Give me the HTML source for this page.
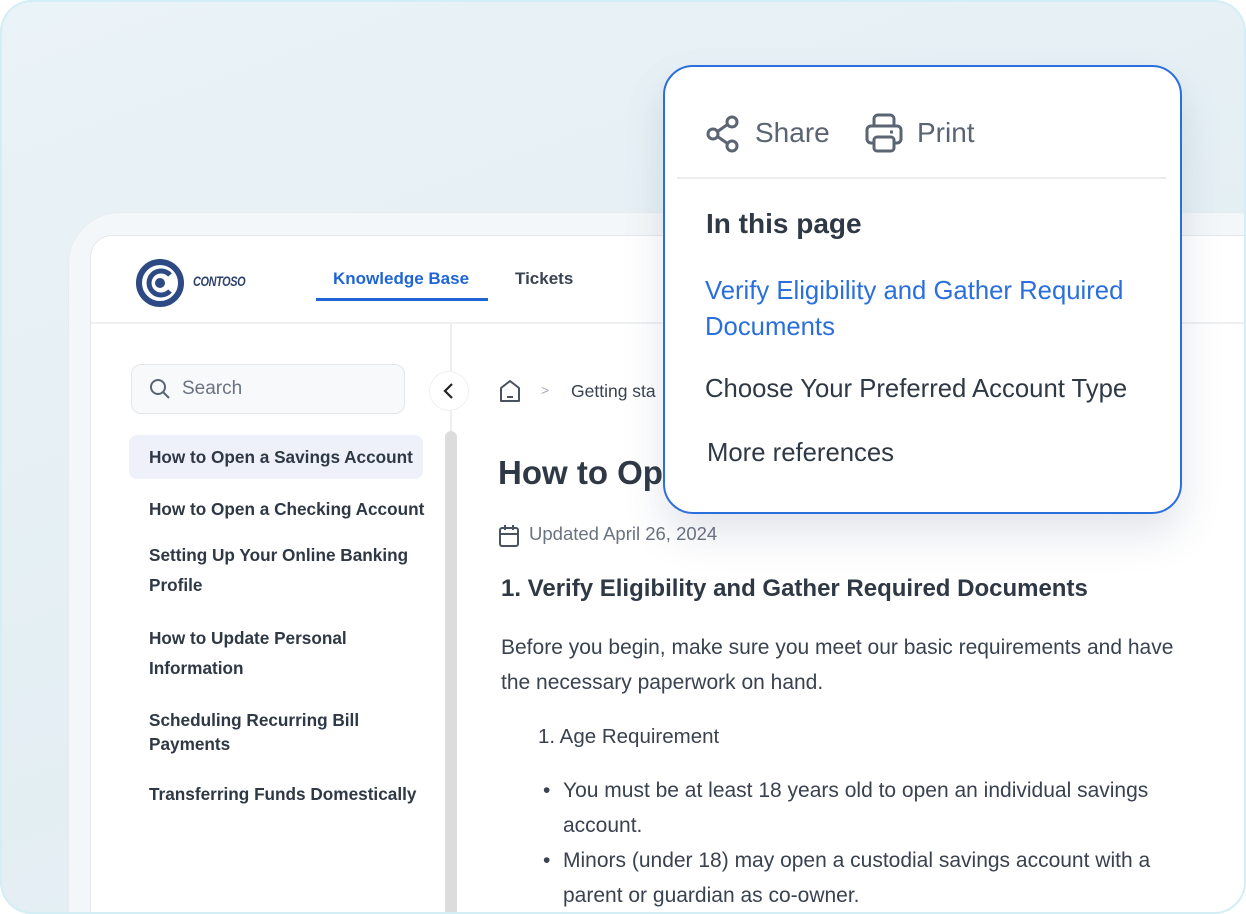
<!DOCTYPE html>
<html><head><meta charset="utf-8"><style>
*{margin:0;padding:0;box-sizing:border-box}
body{width:1246px;height:914px;overflow:hidden;font-family:"Liberation Sans",sans-serif;background:#fff;position:relative}
.frame{position:absolute;left:0;top:0;width:1246px;height:914px;border-radius:32px;background:linear-gradient(160deg,#eaf3f7,#e3eef3 60%,#e9f2f6);overflow:hidden}
.fb{position:absolute;left:0;top:0;width:1246px;height:914px;border-radius:32px;border:2px solid #d3eef4;pointer-events:none}
.panel{position:absolute;left:68px;top:212px;width:1220px;height:760px;border-radius:52px;background:#f4f7f9;border:1px solid #e6edf1}
.card{position:absolute;left:90px;top:235px;width:1200px;height:720px;border-radius:22px;background:#fff;border:1px solid #e3e7eb;overflow:hidden}
.in{position:absolute;left:2px;top:2px;width:1200px;height:720px}
.abs{position:absolute}
.hdr{left:0;top:0;width:1200px;height:88px;border-bottom:2px solid #eef0f2}
.nav{font-size:17px;font-weight:bold;color:#3b4452}
.item{position:absolute;font-size:17.2px;font-weight:bold;color:#2f3845;line-height:30px;white-space:nowrap}
.pop{position:absolute;left:663px;top:65px;width:519px;height:449px;border:2px solid #2b6fdc;border-radius:30px;background:#fff;box-shadow:0 20px 40px rgba(60,80,120,.15)}
.body{color:#3a4250;font-size:21px}
</style></head><body>
<div class="frame">
<div class="panel"></div>
<div class="card">
 <div class="abs hdr"></div>
 <div class="in">
 <svg class="abs" style="left:42px;top:20px" width="50" height="50" viewBox="0 0 50 50"><circle cx="25" cy="25" r="21" fill="none" stroke="#2d4a84" stroke-width="6"/><path d="M35 17 A12 12 0 1 0 35 33" fill="none" stroke="#2d4a84" stroke-width="5"/><circle cx="25" cy="25" r="5" fill="#2d4a84"/></svg>
 <div class="abs" style="left:100px;top:35px;font-size:14px;font-weight:bold;font-style:italic;color:#2d3f6b;letter-spacing:-.5px;transform:scaleX(.78);transform-origin:left">CONTOSO</div>
 <div class="abs nav" style="left:240px;top:31px;color:#1f65d6">Knowledge Base</div>
 <div class="abs" style="left:223px;top:60px;width:172px;height:3px;background:#1f65d6"></div>
 <div class="abs nav" style="left:422px;top:31px">Tickets</div>
 <div class="abs" style="left:357px;top:86px;width:2px;height:640px;background:#eceef0"></div>
 <div class="abs" style="left:38px;top:126px;width:274px;height:50px;border:1px solid #e3e6ea;border-radius:10px;background:#f7f9fb"></div>
 <svg class="abs" style="left:56px;top:140px" width="22" height="22" viewBox="0 0 22 22"><circle cx="9" cy="9" r="7" fill="none" stroke="#5b6472" stroke-width="2"/><path d="M14 14l6 6" stroke="#5b6472" stroke-width="2"/></svg>
 <div class="abs" style="left:89px;top:140px;font-size:19px;color:#6b7380">Search</div>
 <div class="abs" style="left:336px;top:133px;width:40px;height:40px;border-radius:50%;background:#fff;border:1px solid #eef0f2"></div>
 <svg class="abs" style="left:347px;top:143px" width="18" height="20" viewBox="0 0 18 20"><path d="M12 3L5 10l7 7" fill="none" stroke="#222" stroke-width="2.2"/></svg>
 <div class="abs" style="left:352px;top:193px;width:12px;height:500px;border-radius:6px;background:#dcdcdc"></div>
 <svg class="abs" style="left:405px;top:140px" width="24" height="26" viewBox="0 0 24 26"><path d="M3 10L12 3l9 7v13H3z" fill="none" stroke="#4a5260" stroke-width="2" stroke-linejoin="round"/><path d="M9 19h6" stroke="#4a5260" stroke-width="2"/></svg>
 <div class="abs" style="left:448px;top:144px;font-size:14px;color:#aab">&gt;</div>
 <div class="abs" style="left:478px;top:143px;font-size:17.5px;color:#3a4250">Getting sta</div>
 <div class="abs" style="left:36px;top:197px;width:294px;height:44px;border-radius:8px;background:#eef1fa"></div>
 <div class="item" style="left:56px;top:204px">How to Open a Savings Account</div>
 <div class="item" style="left:56px;top:256px">How to Open a Checking Account</div>
 <div class="item" style="left:56px;top:302px">Setting Up Your Online Banking<br>Profile</div>
 <div class="item" style="left:56px;top:385px">How to Update Personal<br>Information</div>
 <div class="item" style="left:56px;top:470px;line-height:24px">Scheduling Recurring Bill<br>Payments</div>
 <div class="item" style="left:56px;top:541px">Transferring Funds Domestically</div>
 <div class="abs" style="left:405px;top:216px;font-size:33px;font-weight:bold;color:#2f3845">How to Ope</div>
 <svg class="abs" style="left:405px;top:286px" width="22" height="24" viewBox="0 0 22 24"><rect x="2" y="4" width="18" height="18" rx="2" fill="none" stroke="#4a5260" stroke-width="2"/><path d="M2 10h18M7 1v5M15 1v5" stroke="#4a5260" stroke-width="2"/></svg>
 <div class="abs" style="left:436px;top:285px;font-size:18.5px;color:#6b7380">Updated April 26, 2024</div>
 <div class="abs" style="left:408px;top:337px;font-size:24px;font-weight:bold;color:#2f3845">1. Verify Eligibility and Gather Required Documents</div>
 <div class="abs body" style="left:408px;top:392px;line-height:35px;width:700px">Before you begin, make sure you meet our basic requirements and have<br>the necessary paperwork on hand.</div>
 <div class="abs body" style="left:445px;top:487px;font-size:20.5px">1. Age Requirement</div>
 <div class="abs body" style="left:450px;top:535px;line-height:35px;width:650px">•<br><br>•</div>
 <div class="abs body" style="left:470px;top:535px;line-height:35px;width:650px;white-space:nowrap">You must be at least 18 years old to open an individual savings<br>account.<br>Minors (under 18) may open a custodial savings account with a<br>parent or guardian as co-owner.</div>
 </div>
</div>
<div class="pop">
 <svg class="abs" style="left:40px;top:47px" width="36" height="40" viewBox="0 0 36 40"><circle cx="27" cy="8" r="5" fill="none" stroke="#5b6472" stroke-width="3"/><circle cx="8" cy="20" r="5" fill="none" stroke="#5b6472" stroke-width="3"/><circle cx="27" cy="32" r="5" fill="none" stroke="#5b6472" stroke-width="3"/><path d="M12.5 17.5l10-7M12.5 22.5l10 7" stroke="#5b6472" stroke-width="3"/></svg>
 <div class="abs" style="left:90px;top:50px;font-size:28px;color:#5b6472">Share</div>
 <svg class="abs" style="left:200px;top:45px" width="38" height="42" viewBox="0 0 38 42"><path d="M9 14V7a4 4 0 0 1 4-4h12a4 4 0 0 1 4 4v7" fill="none" stroke="#5b6472" stroke-width="3"/><path d="M9 31H6a4 4 0 0 1-4-4V18a4 4 0 0 1 4-4h26a4 4 0 0 1 4 4v9a4 4 0 0 1-4 4h-3" fill="none" stroke="#5b6472" stroke-width="3"/><rect x="9" y="25" width="20" height="14" rx="3" fill="none" stroke="#5b6472" stroke-width="3"/><path d="M25 20h3" stroke="#5b6472" stroke-width="3"/></svg>
 <div class="abs" style="left:252px;top:50px;font-size:28px;color:#5b6472">Print</div>
 <div class="abs" style="left:12px;top:110px;width:489px;height:2px;background:#ececec"></div>
 <div class="abs" style="left:41px;top:141px;font-size:28px;font-weight:bold;color:#2f3845">In this page</div>
 <div class="abs" style="left:40px;top:206px;font-size:25.7px;color:#2a6fdc;line-height:36px;white-space:nowrap">Verify Eligibility and Gather Required<br>Documents</div>
 <div class="abs" style="left:40px;top:308px;font-size:25.7px;color:#2f3845;white-space:nowrap">Choose Your Preferred Account Type</div>
 <div class="abs" style="left:42px;top:372px;font-size:25.7px;color:#2f3845">More references</div>
</div>
</div>
<div class="fb"></div>
</body></html>
